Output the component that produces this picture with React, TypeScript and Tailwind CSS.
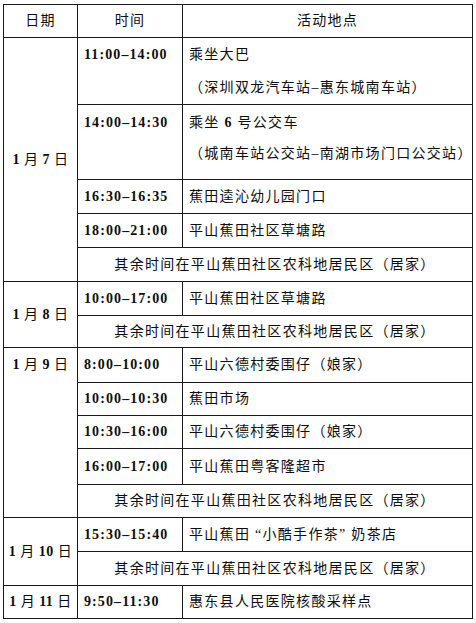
import React from "react";

const cell = "border border-[#1a1a1a] p-0";

// digits in the schedule are bold serif, the Chinese stays regular
const Txt = ({ s }: { s: string }) => (
  <>
    {s.split(/(\d+)/).map((part, i) =>
      /^\d+$/.test(part) ? (
        <span key={i} className="font-bold">
          {part}
        </span>
      ) : (
        <span key={i}>{part}</span>
      )
    )}
  </>
);

const Time = ({ t }: { t: string }) => (
  <td className={`${cell} pl-[6px] align-middle`}>
    <span className="font-bold tracking-[1.1px]">{t}</span>
  </td>
);

const Place = ({ p }: { p: string }) => (
  <td className={`${cell} pl-[6px] align-middle tracking-[1.3px]`}>
    <Txt s={p} />
  </td>
);

const Rest = ({ h }: { h: number }) => (
  <tr style={{ height: h }}>
    <td colSpan={2} className={`${cell} text-center align-middle tracking-[1.3px]`}>
      其余时间在平山蕉田社区农科地居民区（居家）
    </td>
  </tr>
);

const DateCell = ({ d, span, top }: { d: string; span: number; top?: boolean }) => (
  <td
    rowSpan={span}
    className={`${cell} text-center tracking-[0.5px] whitespace-pre ${top ? "align-top pt-[8px]" : "align-middle"}`}
  >
    <Txt s={d} />
  </td>
);

const App = () => {
  return (
    <div className="w-[476px] h-[623px] bg-white pt-[4px] pl-[3px] text-[14px] leading-[18px] text-[#0d0d0d] font-['Liberation_Serif','Noto_Sans_CJK_SC',serif]">
      <table className="border-collapse table-fixed w-[469px]">
        <colgroup>
          <col className="w-[74px]" />
          <col className="w-[105px]" />
          <col className="w-[290px]" />
        </colgroup>
        <tbody>
          <tr className="h-[33px]">
            <td className={`${cell} text-center align-middle tracking-[1.3px]`}>日期</td>
            <td className={`${cell} text-center align-middle tracking-[1.3px]`}>时间</td>
            <td className={`${cell} text-center align-middle tracking-[1.3px]`}>活动地点</td>
          </tr>

          {/* 1月7日 */}
          <tr className="h-[67px]">
            <DateCell d="1 月 7 日" span={5} />
            <td className={`${cell} pl-[6px] align-top leading-[33px]`}>
              <span className="font-bold tracking-[1.1px]">11:00–14:00</span>
            </td>
            <td className={`${cell} pl-[6px] align-top leading-[33px] tracking-[1.3px]`}>
              <div>乘坐大巴</div>
              <div>（深圳双龙汽车站–惠东城南车站）</div>
            </td>
          </tr>
          <tr className="h-[75px]">
            <td className={`${cell} pl-[6px] align-top pt-[2px] leading-[32px]`}>
              <span className="font-bold tracking-[1.1px]">14:00–14:30</span>
            </td>
            <td className={`${cell} pl-[6px] align-top pt-[2px] leading-[31px] tracking-[1.3px]`}>
              <div>
                <Txt s="乘坐 6 号公交车" />
              </div>
              <div>（城南车站公交站–南湖市场门口公交站）</div>
            </td>
          </tr>
          <tr className="h-[34px]">
            <Time t="16:30–16:35" />
            <Place p="蕉田逵沁幼儿园门口" />
          </tr>
          <tr className="h-[34px]">
            <Time t="18:00–21:00" />
            <Place p="平山蕉田社区草塘路" />
          </tr>
          <Rest h={34} />

          {/* 1月8日 */}
          <tr className="h-[34px]">
            <DateCell d="1 月 8 日" span={2} />
            <Time t="10:00–17:00" />
            <Place p="平山蕉田社区草塘路" />
          </tr>
          <Rest h={32} />

          {/* 1月9日 */}
          <tr className="h-[35px]">
            <DateCell d="1 月 9 日" span={5} top />
            <Time t="8:00–10:00" />
            <Place p="平山六德村委围仔（娘家）" />
          </tr>
          <tr className="h-[33px]">
            <Time t="10:00–10:30" />
            <Place p="蕉田市场" />
          </tr>
          <tr className="h-[33px]">
            <Time t="10:30–16:00" />
            <Place p="平山六德村委围仔（娘家）" />
          </tr>
          <tr className="h-[36px]">
            <Time t="16:00–17:00" />
            <Place p="平山蕉田粤客隆超市" />
          </tr>
          <Rest h={33} />

          {/* 1月10日 */}
          <tr className="h-[34px]">
            <DateCell d="1 月 10 日" span={2} />
            <Time t="15:30–15:40" />
            <Place p="平山蕉田 “小酷手作茶” 奶茶店" />
          </tr>
          <Rest h={34} />

          {/* 1月11日 */}
          <tr className="h-[33px]">
            <DateCell d="1 月 11 日" span={1} />
            <Time t="9:50–11:30" />
            <Place p="惠东县人民医院核酸采样点" />
          </tr>
        </tbody>
      </table>
    </div>
  );
};

export default App;
